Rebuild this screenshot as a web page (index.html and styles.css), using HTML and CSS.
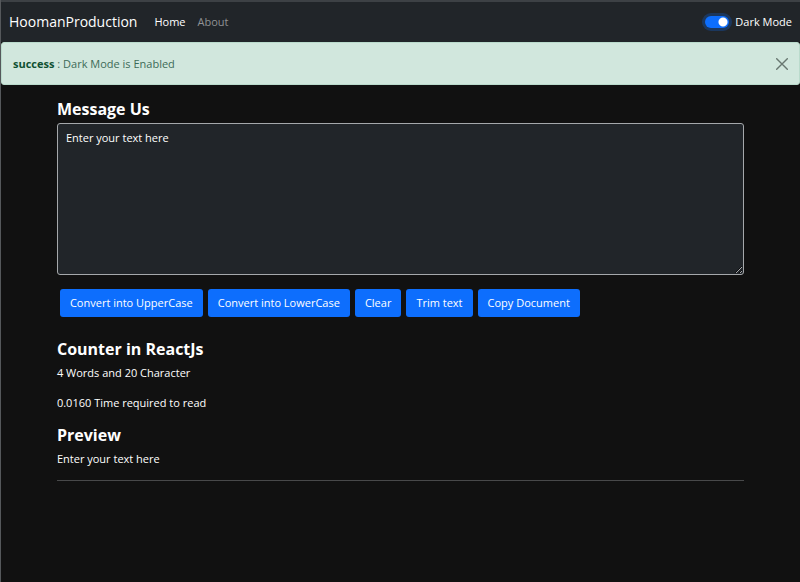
FILE: index.html
```html
<!DOCTYPE html>
<html lang="en">
<head>
<meta charset="utf-8">
<meta name="viewport" content="width=device-width, initial-scale=1">
<title>HoomanProduction</title>
<link rel="stylesheet" href="styles.css">
</head>
<body>
<nav class="navbar">
  <a class="brand" href="#">HoomanProduction</a>
  <div class="links">
    <a class="link active" href="#">Home</a>
    <a class="link" href="#">About</a>
  </div>
  <div class="mode">
    <input class="switch" type="checkbox" role="switch" id="mode" checked>
    <label for="mode">Dark Mode</label>
  </div>
</nav>
<div class="alert" role="alert">
  <p><strong>success</strong> : Dark Mode is Enabled</p>
  <button class="close" type="button" aria-label="Close">
    <svg viewBox="0 0 12 12" width="12" height="12" aria-hidden="true"><path d="M.7.7l10.6 10.6M11.3.7L.7 11.3" fill="none" stroke="currentColor" stroke-width="1.4" stroke-linecap="round"/></svg>
  </button>
</div>
<main class="container">
  <section>
    <h1><label for="message">Message Us</label></h1>
    <textarea class="message" id="message">Enter your text here</textarea>
    <div class="actions">
      <button class="btn" type="button">Convert into UpperCase</button>
      <button class="btn" type="button">Convert into LowerCase</button>
      <button class="btn" type="button">Clear</button>
      <button class="btn" type="button">Trim text</button>
      <button class="btn" type="button">Copy Document</button>
    </div>
  </section>
  <section class="summary">
    <h2>Counter in ReactJs</h2>
    <p>4 Words and 20 Character</p>
    <p>0.0160 Time required to read</p>
    <h2>Preview</h2>
    <p>Enter your text here</p>
    <hr>
  </section>
</main>
</body>
</html>
```
FILE: styles.css
```css
* {
  box-sizing: border-box;
}

body {
  margin: 0;
  min-height: 100vh;
  border-left: 1px solid #55585b;
  background: #111;
  color: #fff;
  font: 11px/18px "Segoe UI", "Open Sans", "Noto Sans", sans-serif;
}

h1, h2, p {
  margin: 0;
}

h1, h2 {
  font-size: 16px;
  line-height: 22px;
  font-weight: 700;
}

.navbar {
  display: flex;
  align-items: center;
  height: 42px;
  padding: 0 8px;
  border-top: 2px solid #3d4145;
  background: #212529;
}

.brand {
  margin-right: 11px;
  color: #fff;
  font-size: 14px;
  text-decoration: none;
}

.links {
  display: flex;
  flex: 1;
}

.link {
  padding: 6px;
  color: #909294;
  text-decoration: none;
}

.link.active {
  color: #fff;
}

.mode {
  display: flex;
  align-items: center;
  gap: 6px;
}

.switch {
  appearance: none;
  width: 24px;
  height: 12px;
  margin: 0;
  border-radius: 6px;
  background: #0d6efd radial-gradient(circle at 18px 6px, #fff 4px, transparent 5px);
  box-shadow: 0 0 0 3px rgba(13, 110, 253, 0.25);
}

.alert {
  display: flex;
  align-items: center;
  justify-content: space-between;
  height: 43px;
  padding: 0 11px;
  border: 1px solid #badbcc;
  border-radius: 3px;
  background: #d1e7dd;
  color: #3d6b57;
}

.alert strong {
  color: #0f5132;
  font-weight: 700;
}

.close {
  display: flex;
  padding: 0;
  border: 0;
  background: none;
  color: #687770;
}

.container {
  width: 86%;
  margin: 0 auto;
  padding-top: 13px;
}

.message {
  display: block;
  width: 100%;
  height: 152px;
  margin-top: 3px;
  padding: 5px 8px;
  border: 1px solid #a5a8ab;
  border-radius: 3px;
  background: #212529;
  color: #fff;
  font: inherit;
}

.actions {
  display: flex;
  flex-wrap: wrap;
  gap: 5px;
  padding: 14px 3px;
}

.btn {
  height: 28px;
  padding: 0 10px;
  border: 0;
  border-radius: 3px;
  background: #0d6efd;
  color: #fff;
  font: inherit;
}

.summary {
  padding-top: 7px;
}

.summary h2 {
  margin-bottom: 4px;
}

.summary p {
  margin-bottom: 12px;
}

hr {
  margin: 0;
  border: 0;
  border-top: 1px solid #48494a;
}
```
